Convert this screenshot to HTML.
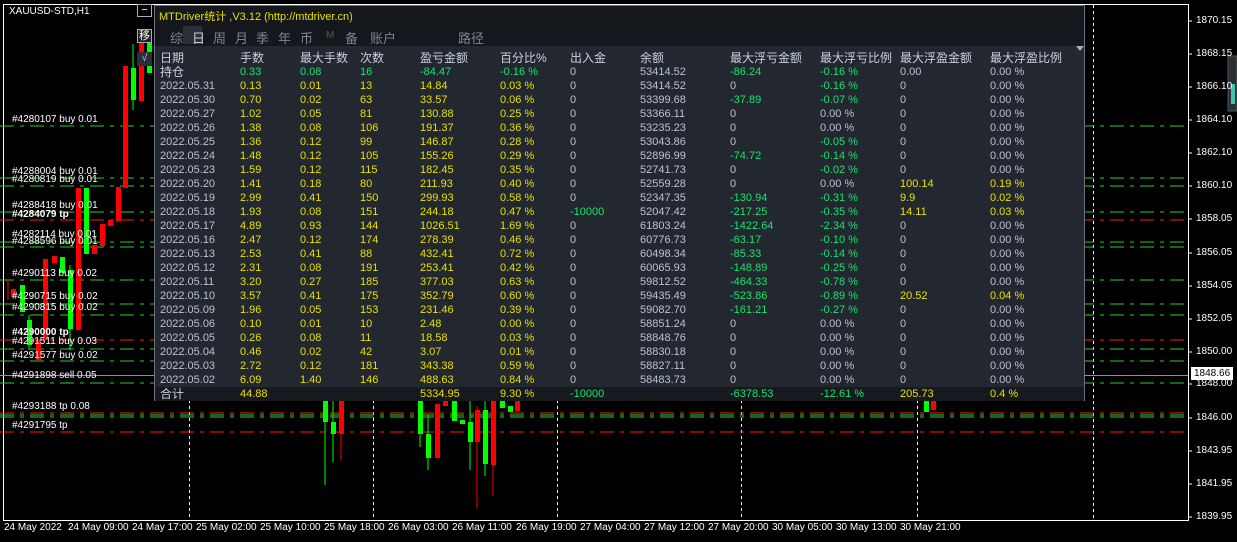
<!DOCTYPE html>
<html><head><meta charset="utf-8"><style>
*{margin:0;padding:0;box-sizing:border-box}
body{width:1237px;height:542px;background:#000;position:relative;overflow:hidden;font-family:"Liberation Sans","Noto Sans CJK SC",sans-serif;font-size:11px;color:#fff}
.a{position:absolute;white-space:nowrap}
.ol{position:absolute;left:12px;font-size:10px;color:#fff;white-space:nowrap}
.px{position:absolute;left:1196px;font-size:10px;color:#fff}
.tx{position:absolute;top:522px;font-size:10px;color:#fff}
#pan{position:absolute;left:154px;top:5px;width:931px;height:396px;background:#232830;border:1px solid #6b7280}
#ttl{position:absolute;left:0;top:0;width:100%;height:40px;background:#14171b}
.r{position:absolute;left:0;width:100%;height:14px;font-size:11px;line-height:14px}
.r span{position:absolute;white-space:nowrap}
.c1{left:5px}.c2{left:85px}.c3{left:145px}.c4{left:205px}.c5{left:265px}.c6{left:345px}.c7{left:415px}.c8{left:485px}.c9{left:575px}.c10{left:665px}.c11{left:745px}.c12{left:835px}
.d{color:#b8c2d6}.y{color:#e6e000}.g{color:#19e36b}.w{color:#b8c2d6}
.h{color:#c8d0e0;font-size:12px}
.tab{position:absolute;top:22px;font-size:13px;color:#7e858f}
</style></head><body>
<svg class="a" style="left:0;top:0" width="1237" height="542">
<rect x="3.5" y="4.5" width="1185" height="516" fill="none" stroke="#fff" stroke-width="1"/>
<g stroke="#fff" stroke-dasharray="3,3">
<line x1="189.5" y1="400" x2="189.5" y2="520"/><line x1="373.5" y1="400" x2="373.5" y2="520"/><line x1="557.5" y1="400" x2="557.5" y2="520"/><line x1="741.5" y1="400" x2="741.5" y2="520"/><line x1="917.5" y1="400" x2="917.5" y2="520"/><line x1="1093.5" y1="5" x2="1093.5" y2="520"/>
</g>
<g stroke="#2ecc2e" stroke-dasharray="14,6,4,6">
<line x1="0" y1="126" x2="1188" y2="126"/><line x1="0" y1="178" x2="1188" y2="178"/><line x1="0" y1="186" x2="1188" y2="186"/><line x1="0" y1="212" x2="1188" y2="212"/><line x1="0" y1="242" x2="1188" y2="242"/><line x1="0" y1="247" x2="1188" y2="247"/><line x1="0" y1="280" x2="1188" y2="280"/><line x1="0" y1="304" x2="1188" y2="304"/><line x1="0" y1="315" x2="1188" y2="315"/><line x1="0" y1="349" x2="1188" y2="349"/><line x1="0" y1="361" x2="1188" y2="361"/><line x1="0" y1="383" x2="1188" y2="383"/><line x1="0" y1="415" x2="1188" y2="415"/><line x1="0" y1="417" x2="1188" y2="417"/>
</g>
<g stroke="#ff1a1a" stroke-dasharray="14,6,4,6">
<line x1="0" y1="220" x2="1188" y2="220"/><line x1="0" y1="340" x2="1188" y2="340"/><line x1="0" y1="413" x2="1188" y2="413"/><line x1="0" y1="432" x2="1188" y2="432"/>
</g>
<line x1="0" y1="375.5" x2="1188" y2="375.5" stroke="#8a8f99"/>
<g stroke-width="1">
<line x1="8" y1="280" x2="8" y2="300" stroke="#f00"/><rect x="11" y="289" width="5" height="8" fill="#f00"/>
<rect x="20" y="285" width="5" height="27" fill="#0f0"/><line x1="29" y1="315" x2="29" y2="350" stroke="#0f0"/><rect x="27" y="320" width="5" height="25" fill="#0f0"/>
<rect x="36" y="340" width="5" height="20" fill="#f00"/>
<rect x="43" y="259" width="5" height="81" fill="#f00"/><rect x="52" y="256" width="5" height="7" fill="#f00"/><rect x="60" y="257" width="5" height="16" fill="#0f0"/>
<line x1="70" y1="265" x2="70" y2="350" stroke="#0f0"/><rect x="68" y="270" width="5" height="59" fill="#0f0"/>
<rect x="76" y="188" width="5" height="142" fill="#f00"/><rect x="84" y="188" width="5" height="66" fill="#0f0"/>
<rect x="92" y="245" width="5" height="9" fill="#f00"/><rect x="100" y="224" width="5" height="22" fill="#f00"/><rect x="108" y="220" width="5" height="6" fill="#f00"/>
<rect x="116" y="187" width="5" height="34" fill="#f00"/><rect x="123" y="66" width="5" height="122" fill="#f00"/>
<line x1="133" y1="44" x2="133" y2="110" stroke="#0f0"/><rect x="131" y="68" width="5" height="32" fill="#0f0"/>
<rect x="139" y="43" width="5" height="58" fill="#f00"/><rect x="147" y="43" width="5" height="30" fill="#0f0"/>
<line x1="325" y1="400" x2="325" y2="485" stroke="#0f0"/><rect x="323" y="400" width="5" height="22" fill="#0f0"/><line x1="333" y1="400" x2="333" y2="462" stroke="#0f0"/><rect x="331" y="422" width="5" height="12" fill="#0f0"/><line x1="341" y1="400" x2="341" y2="460" stroke="#f00"/><rect x="339" y="400" width="5" height="34" fill="#f00"/>
<line x1="420" y1="400" x2="420" y2="447" stroke="#0f0"/><rect x="418" y="400" width="5" height="34" fill="#0f0"/><line x1="428" y1="415" x2="428" y2="470" stroke="#0f0"/><rect x="426" y="434" width="5" height="24" fill="#0f0"/>
<rect x="435" y="404" width="5" height="54" fill="#f00"/><rect x="443" y="400" width="5" height="6" fill="#f00"/><rect x="452" y="400" width="5" height="21" fill="#0f0"/><rect x="460" y="420" width="5" height="4" fill="#0f0"/>
<line x1="470" y1="400" x2="470" y2="470" stroke="#0f0"/><rect x="468" y="422" width="5" height="20" fill="#0f0"/><line x1="477" y1="406" x2="477" y2="508" stroke="#f00"/><rect x="475" y="410" width="5" height="32" fill="#f00"/>
<line x1="485" y1="400" x2="485" y2="476" stroke="#0f0"/><rect x="483" y="410" width="5" height="54" fill="#0f0"/><line x1="493" y1="400" x2="493" y2="496" stroke="#f00"/><rect x="491" y="400" width="5" height="65" fill="#f00"/>
<rect x="500" y="400" width="5" height="8" fill="#0f0"/><rect x="508" y="406" width="5" height="6" fill="#0f0"/><rect x="515" y="400" width="5" height="11" fill="#f00"/>
<rect x="924" y="400" width="5" height="12" fill="#0f0"/><rect x="931" y="400" width="5" height="10" fill="#f00"/>
</g>
<g stroke="#fff"><line x1="1188" y1="21" x2="1192" y2="21"/><line x1="1188" y1="54" x2="1192" y2="54"/><line x1="1188" y1="87" x2="1192" y2="87"/><line x1="1188" y1="120" x2="1192" y2="120"/><line x1="1188" y1="153" x2="1192" y2="153"/><line x1="1188" y1="186" x2="1192" y2="186"/><line x1="1188" y1="219" x2="1192" y2="219"/><line x1="1188" y1="253" x2="1192" y2="253"/><line x1="1188" y1="286" x2="1192" y2="286"/><line x1="1188" y1="319" x2="1192" y2="319"/><line x1="1188" y1="352" x2="1192" y2="352"/><line x1="1188" y1="384" x2="1192" y2="384"/><line x1="1188" y1="418" x2="1192" y2="418"/><line x1="1188" y1="451" x2="1192" y2="451"/><line x1="1188" y1="484" x2="1192" y2="484"/><line x1="1188" y1="517" x2="1192" y2="517"/></g>
<rect x="1228" y="56" width="9" height="55" fill="#2a2f36" stroke="#555"/>
<rect x="1231" y="84" width="4" height="20" fill="#3cc8b0"/>
</svg>
<div class="a" style="left:9px;top:6px;font-size:10px">XAUUSD-STD,H1</div>
<div class="a" style="left:137px;top:4px;width:15px;height:13px;border:1px solid #aab;text-align:center;line-height:10px;font-size:11px;background:#000">−</div>
<div class="a" style="left:137px;top:29px;width:15px;height:14px;border:1px solid #aab;text-align:center;line-height:12px;font-size:11px;background:#222">移</div>
<div class="a" style="left:137px;top:52px;width:15px;height:14px;background:#2b3038;text-align:center;line-height:14px;font-size:10px;color:#bcd">√</div>
<div class="ol" style="top:114px">#4280107 buy 0.01</div>
<div class="ol" style="top:166px">#4288004 buy 0.01</div>
<div class="ol" style="top:174px">#4280819 buy 0.01</div>
<div class="ol" style="top:200px">#4288418 buy 0.01</div>
<div class="ol" style="top:209px;font-weight:bold">#4284079 tp</div>
<div class="ol" style="top:229px">#4282114 buy 0.01</div>
<div class="ol" style="top:236px">#4288596 buy 0.01</div>
<div class="ol" style="top:268px">#4290113 buy 0.02</div>
<div class="ol" style="top:291px">#4290715 buy 0.02</div>
<div class="ol" style="top:302px">#4290815 buy 0.02</div>
<div class="ol" style="top:327px;font-weight:bold">#4290000 tp</div>
<div class="ol" style="top:336px">#4291511 buy 0.03</div>
<div class="ol" style="top:350px">#4291577 buy 0.02</div>
<div class="ol" style="top:370px">#4291898 sell 0.05</div>
<div class="ol" style="top:401px">#4293188 tp 0.08</div>
<div class="ol" style="top:420px">#4291795 tp</div>
<div class="px" style="top:15px">1870.15</div><div class="px" style="top:48px">1868.15</div><div class="px" style="top:81px">1866.10</div><div class="px" style="top:114px">1864.10</div><div class="px" style="top:147px">1862.10</div><div class="px" style="top:180px">1860.10</div><div class="px" style="top:213px">1858.05</div><div class="px" style="top:247px">1856.05</div><div class="px" style="top:280px">1854.05</div><div class="px" style="top:313px">1852.05</div><div class="px" style="top:346px">1850.00</div><div class="px" style="top:378px">1848.00</div><div class="px" style="top:412px">1846.00</div><div class="px" style="top:445px">1843.95</div><div class="px" style="top:478px">1841.95</div><div class="px" style="top:511px">1839.95</div>
<div class="a" style="left:1191px;top:367px;width:42px;height:13px;background:#fff;color:#000;font-size:10px;line-height:13px;padding-left:3px">1848.66</div>
<div class="tx" style="left:4px">24 May 2022</div><div class="tx" style="left:68px">24 May 09:00</div><div class="tx" style="left:132px">24 May 17:00</div><div class="tx" style="left:196px">25 May 02:00</div><div class="tx" style="left:260px">25 May 10:00</div><div class="tx" style="left:324px">25 May 18:00</div><div class="tx" style="left:388px">26 May 03:00</div><div class="tx" style="left:452px">26 May 11:00</div><div class="tx" style="left:516px">26 May 19:00</div><div class="tx" style="left:580px">27 May 04:00</div><div class="tx" style="left:644px">27 May 12:00</div><div class="tx" style="left:708px">27 May 20:00</div><div class="tx" style="left:772px">30 May 05:00</div><div class="tx" style="left:836px">30 May 13:00</div><div class="tx" style="left:900px">30 May 21:00</div>

<div id="pan">
<div id="ttl">
<div class="a" style="left:4px;top:2px;color:#e6e000;font-size:11px">MTDriver统计 ,V3.12 (http://mtdriver.cn)</div>
<div class="a" style="left:28px;top:20px;width:19px;height:18px;background:#2b3038"></div>
<div class="tab" style="left:15px">综</div><div class="tab" style="left:37px;color:#c8d0e0">日</div><div class="tab" style="left:58px">周</div><div class="tab" style="left:80px">月</div><div class="tab" style="left:101px">季</div><div class="tab" style="left:123px">年</div><div class="tab" style="left:145px">币</div><div class="tab" style="left:171px;font-size:10px;top:24px;color:#555">M</div><div class="tab" style="left:190px">备</div><div class="tab" style="left:215px">账户</div><div class="tab" style="left:303px">路径</div>
</div>
<div class="a" style="left:921px;top:40px;width:0;height:0;border-left:4px solid transparent;border-right:4px solid transparent;border-top:5px solid #aab"></div>
<div class="r h" style="top:45px"><span class="c1">日期</span><span class="c2">手数</span><span class="c3">最大手数</span><span class="c4">次数</span><span class="c5">盈亏金额</span><span class="c6">百分比%</span><span class="c7">出入金</span><span class="c8">余额</span><span class="c9">最大浮亏金额</span><span class="c10">最大浮亏比例</span><span class="c11">最大浮盈金额</span><span class="c12">最大浮盈比例</span></div>
<div class="r" style="top:59px"><span class="c1 h">持仓</span><span class="c2 g">0.33</span><span class="c3 g">0.08</span><span class="c4 g">16</span><span class="c5 g">-84.47</span><span class="c6 g">-0.16 %</span><span class="c7 w">0</span><span class="c8 w">53414.52</span><span class="c9 g">-86.24</span><span class="c10 g">-0.16 %</span><span class="c11 w">0.00</span><span class="c12 w">0.00 %</span></div>
<div class="r" style="top:73px"><span class="c1 d">2022.05.31</span><span class="c2 y">0.13</span><span class="c3 y">0.01</span><span class="c4 y">13</span><span class="c5 y">14.84</span><span class="c6 y">0.03 %</span><span class="c7 w">0</span><span class="c8 w">53414.52</span><span class="c9 w">0</span><span class="c10 g">-0.16 %</span><span class="c11 w">0</span><span class="c12 w">0.00 %</span></div>
<div class="r" style="top:87px"><span class="c1 d">2022.05.30</span><span class="c2 y">0.70</span><span class="c3 y">0.02</span><span class="c4 y">63</span><span class="c5 y">33.57</span><span class="c6 y">0.06 %</span><span class="c7 w">0</span><span class="c8 w">53399.68</span><span class="c9 g">-37.89</span><span class="c10 g">-0.07 %</span><span class="c11 w">0</span><span class="c12 w">0.00 %</span></div>
<div class="r" style="top:101px"><span class="c1 d">2022.05.27</span><span class="c2 y">1.02</span><span class="c3 y">0.05</span><span class="c4 y">81</span><span class="c5 y">130.88</span><span class="c6 y">0.25 %</span><span class="c7 w">0</span><span class="c8 w">53366.11</span><span class="c9 w">0</span><span class="c10 w">0.00 %</span><span class="c11 w">0</span><span class="c12 w">0.00 %</span></div>
<div class="r" style="top:115px"><span class="c1 d">2022.05.26</span><span class="c2 y">1.38</span><span class="c3 y">0.08</span><span class="c4 y">106</span><span class="c5 y">191.37</span><span class="c6 y">0.36 %</span><span class="c7 w">0</span><span class="c8 w">53235.23</span><span class="c9 w">0</span><span class="c10 w">0.00 %</span><span class="c11 w">0</span><span class="c12 w">0.00 %</span></div>
<div class="r" style="top:129px"><span class="c1 d">2022.05.25</span><span class="c2 y">1.36</span><span class="c3 y">0.12</span><span class="c4 y">99</span><span class="c5 y">146.87</span><span class="c6 y">0.28 %</span><span class="c7 w">0</span><span class="c8 w">53043.86</span><span class="c9 w">0</span><span class="c10 g">-0.05 %</span><span class="c11 w">0</span><span class="c12 w">0.00 %</span></div>
<div class="r" style="top:143px"><span class="c1 d">2022.05.24</span><span class="c2 y">1.48</span><span class="c3 y">0.12</span><span class="c4 y">105</span><span class="c5 y">155.26</span><span class="c6 y">0.29 %</span><span class="c7 w">0</span><span class="c8 w">52896.99</span><span class="c9 g">-74.72</span><span class="c10 g">-0.14 %</span><span class="c11 w">0</span><span class="c12 w">0.00 %</span></div>
<div class="r" style="top:157px"><span class="c1 d">2022.05.23</span><span class="c2 y">1.59</span><span class="c3 y">0.12</span><span class="c4 y">115</span><span class="c5 y">182.45</span><span class="c6 y">0.35 %</span><span class="c7 w">0</span><span class="c8 w">52741.73</span><span class="c9 w">0</span><span class="c10 g">-0.02 %</span><span class="c11 w">0</span><span class="c12 w">0.00 %</span></div>
<div class="r" style="top:171px"><span class="c1 d">2022.05.20</span><span class="c2 y">1.41</span><span class="c3 y">0.18</span><span class="c4 y">80</span><span class="c5 y">211.93</span><span class="c6 y">0.40 %</span><span class="c7 w">0</span><span class="c8 w">52559.28</span><span class="c9 w">0</span><span class="c10 w">0.00 %</span><span class="c11 y">100.14</span><span class="c12 y">0.19 %</span></div>
<div class="r" style="top:185px"><span class="c1 d">2022.05.19</span><span class="c2 y">2.99</span><span class="c3 y">0.41</span><span class="c4 y">150</span><span class="c5 y">299.93</span><span class="c6 y">0.58 %</span><span class="c7 w">0</span><span class="c8 w">52347.35</span><span class="c9 g">-130.94</span><span class="c10 g">-0.31 %</span><span class="c11 y">9.9</span><span class="c12 y">0.02 %</span></div>
<div class="r" style="top:199px"><span class="c1 d">2022.05.18</span><span class="c2 y">1.93</span><span class="c3 y">0.08</span><span class="c4 y">151</span><span class="c5 y">244.18</span><span class="c6 y">0.47 %</span><span class="c7 g">-10000</span><span class="c8 w">52047.42</span><span class="c9 g">-217.25</span><span class="c10 g">-0.35 %</span><span class="c11 y">14.11</span><span class="c12 y">0.03 %</span></div>
<div class="r" style="top:213px"><span class="c1 d">2022.05.17</span><span class="c2 y">4.89</span><span class="c3 y">0.93</span><span class="c4 y">144</span><span class="c5 y">1026.51</span><span class="c6 y">1.69 %</span><span class="c7 w">0</span><span class="c8 w">61803.24</span><span class="c9 g">-1422.64</span><span class="c10 g">-2.34 %</span><span class="c11 w">0</span><span class="c12 w">0.00 %</span></div>
<div class="r" style="top:227px"><span class="c1 d">2022.05.16</span><span class="c2 y">2.47</span><span class="c3 y">0.12</span><span class="c4 y">174</span><span class="c5 y">278.39</span><span class="c6 y">0.46 %</span><span class="c7 w">0</span><span class="c8 w">60776.73</span><span class="c9 g">-63.17</span><span class="c10 g">-0.10 %</span><span class="c11 w">0</span><span class="c12 w">0.00 %</span></div>
<div class="r" style="top:241px"><span class="c1 d">2022.05.13</span><span class="c2 y">2.53</span><span class="c3 y">0.41</span><span class="c4 y">88</span><span class="c5 y">432.41</span><span class="c6 y">0.72 %</span><span class="c7 w">0</span><span class="c8 w">60498.34</span><span class="c9 g">-85.33</span><span class="c10 g">-0.14 %</span><span class="c11 w">0</span><span class="c12 w">0.00 %</span></div>
<div class="r" style="top:255px"><span class="c1 d">2022.05.12</span><span class="c2 y">2.31</span><span class="c3 y">0.08</span><span class="c4 y">191</span><span class="c5 y">253.41</span><span class="c6 y">0.42 %</span><span class="c7 w">0</span><span class="c8 w">60065.93</span><span class="c9 g">-148.89</span><span class="c10 g">-0.25 %</span><span class="c11 w">0</span><span class="c12 w">0.00 %</span></div>
<div class="r" style="top:269px"><span class="c1 d">2022.05.11</span><span class="c2 y">3.20</span><span class="c3 y">0.27</span><span class="c4 y">185</span><span class="c5 y">377.03</span><span class="c6 y">0.63 %</span><span class="c7 w">0</span><span class="c8 w">59812.52</span><span class="c9 g">-464.33</span><span class="c10 g">-0.78 %</span><span class="c11 w">0</span><span class="c12 w">0.00 %</span></div>
<div class="r" style="top:283px"><span class="c1 d">2022.05.10</span><span class="c2 y">3.57</span><span class="c3 y">0.41</span><span class="c4 y">175</span><span class="c5 y">352.79</span><span class="c6 y">0.60 %</span><span class="c7 w">0</span><span class="c8 w">59435.49</span><span class="c9 g">-523.86</span><span class="c10 g">-0.89 %</span><span class="c11 y">20.52</span><span class="c12 y">0.04 %</span></div>
<div class="r" style="top:297px"><span class="c1 d">2022.05.09</span><span class="c2 y">1.96</span><span class="c3 y">0.05</span><span class="c4 y">153</span><span class="c5 y">231.46</span><span class="c6 y">0.39 %</span><span class="c7 w">0</span><span class="c8 w">59082.70</span><span class="c9 g">-161.21</span><span class="c10 g">-0.27 %</span><span class="c11 w">0</span><span class="c12 w">0.00 %</span></div>
<div class="r" style="top:311px"><span class="c1 d">2022.05.06</span><span class="c2 y">0.10</span><span class="c3 y">0.01</span><span class="c4 y">10</span><span class="c5 y">2.48</span><span class="c6 y">0.00 %</span><span class="c7 w">0</span><span class="c8 w">58851.24</span><span class="c9 w">0</span><span class="c10 w">0.00 %</span><span class="c11 w">0</span><span class="c12 w">0.00 %</span></div>
<div class="r" style="top:325px"><span class="c1 d">2022.05.05</span><span class="c2 y">0.26</span><span class="c3 y">0.08</span><span class="c4 y">11</span><span class="c5 y">18.58</span><span class="c6 y">0.03 %</span><span class="c7 w">0</span><span class="c8 w">58848.76</span><span class="c9 w">0</span><span class="c10 w">0.00 %</span><span class="c11 w">0</span><span class="c12 w">0.00 %</span></div>
<div class="r" style="top:339px"><span class="c1 d">2022.05.04</span><span class="c2 y">0.46</span><span class="c3 y">0.02</span><span class="c4 y">42</span><span class="c5 y">3.07</span><span class="c6 y">0.01 %</span><span class="c7 w">0</span><span class="c8 w">58830.18</span><span class="c9 w">0</span><span class="c10 w">0.00 %</span><span class="c11 w">0</span><span class="c12 w">0.00 %</span></div>
<div class="r" style="top:353px"><span class="c1 d">2022.05.03</span><span class="c2 y">2.72</span><span class="c3 y">0.12</span><span class="c4 y">181</span><span class="c5 y">343.38</span><span class="c6 y">0.59 %</span><span class="c7 w">0</span><span class="c8 w">58827.11</span><span class="c9 w">0</span><span class="c10 w">0.00 %</span><span class="c11 w">0</span><span class="c12 w">0.00 %</span></div>
<div class="r" style="top:367px"><span class="c1 d">2022.05.02</span><span class="c2 y">6.09</span><span class="c3 y">1.40</span><span class="c4 y">146</span><span class="c5 y">488.63</span><span class="c6 y">0.84 %</span><span class="c7 w">0</span><span class="c8 w">58483.73</span><span class="c9 w">0</span><span class="c10 w">0.00 %</span><span class="c11 w">0</span><span class="c12 w">0.00 %</span></div>
<div class="r" style="top:381px;height:14px;background:#16191d"><span class="c1 h">合计</span><span class="c2 y">44.88</span><span class="c5 y">5334.95</span><span class="c6 y">9.30 %</span><span class="c7 g">-10000</span><span class="c9 g">-6378.53</span><span class="c10 g">-12.61 %</span><span class="c11 y">205.73</span><span class="c12 y">0.4 %</span></div>
</div>
</body></html>
